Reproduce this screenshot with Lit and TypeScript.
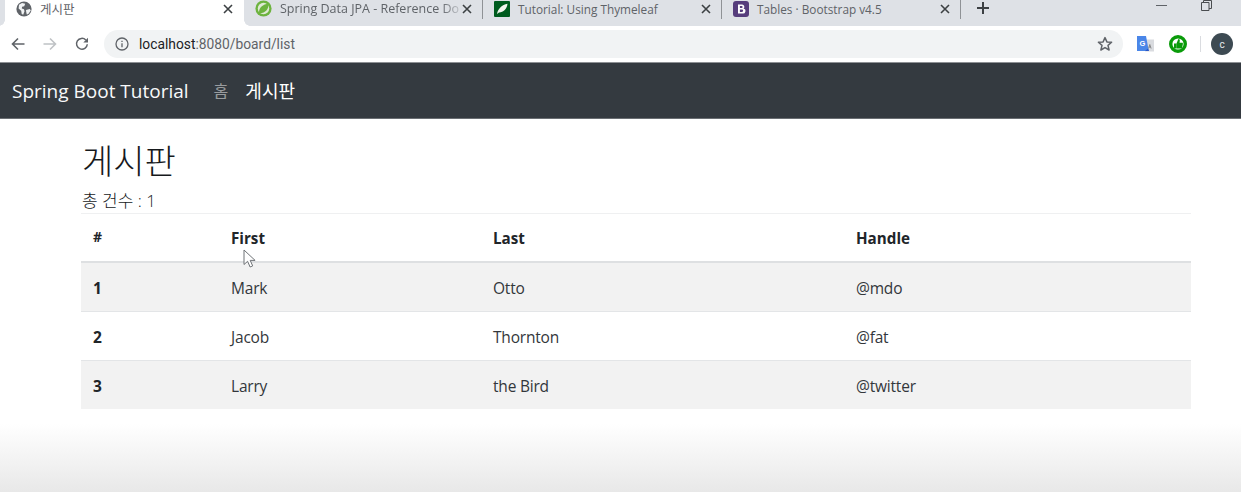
import { LitElement, html, css } from "lit";
import { customElement } from "lit/decorators.js";

const closeIcon = html`<svg class="x" viewBox="0 0 10 10" width="10" height="10"><path d="M1 1L9 9M9 1L1 9" stroke="#3c4043" stroke-width="1.6" fill="none"/></svg>`;

const globe = html`<svg viewBox="0 0 16 16" width="16" height="16"><circle cx="8" cy="8" r="7.6" fill="#5f6368"/><path d="M3 3.800l3-1.700 3.200.7-1 2.400-2.100.6-.3 1.700 2.200.8.5 2-1.300 3.400-1.500-.6-.5-3.400-2.600-2.200zM10 9l3.800-1 1 1.500-2.500 3.600-1.500.3-.6-2.400z" fill="#f1f3f4"/></svg>`;

const spring = html`<svg viewBox="0 0 16 16" width="17" height="17"><circle cx="8" cy="8" r="7.6" fill="#6db33f"/><circle cx="8" cy="8" r="5.4" fill="#dfe9d4"/><path d="M3.800 12.400C3.400 7 7.500 4 12.800 3.600 13 8.800 9.500 12.800 3.800 12.400z" fill="#6db33f"/></svg>`;

const thyme = html`<svg viewBox="0 0 16 16" width="16" height="16"><rect width="16" height="16" rx="1" fill="#005c1f"/><path d="M3 13C4 7.500 8 4 13.500 2.800 13 8 9.500 11.500 5 11.600z" fill="#f2f5ee"/></svg>`;

const boot = html`<svg viewBox="0 0 16 16" width="16" height="16"><rect width="16" height="16" rx="3" fill="#563d7c"/><path d="M5 3.500h4a2.300 2.300 0 0 1 1.500 4.100A2.500 2.500 0 0 1 9.300 12.500H5zM6.900 5.100v2h1.700a1 1 0 0 0 0-2zM6.900 8.600v2.300h2.100a1.150 1.150 0 0 0 0-2.300z" fill="#fff" fill-rule="evenodd"/></svg>`;

const rows = [
  ["1", "Mark", "Otto", "@mdo"],
  ["2", "Jacob", "Thornton", "@fat"],
  ["3", "Larry", "the Bird", "@twitter"],
];

@customElement("app-root")
export class AppRoot extends LitElement {
  static styles = css`
    :host {
      display: block;
      width: 1241px;
      height: 492px;
      overflow: hidden;
      position: relative;
      background: #fff;
      font-family: "Open Sans", "Noto Sans CJK KR", sans-serif;
      color: #212529;
    }
    .strip {
      height: 26px;
      background: #dee1e6;
      display: flex;
      padding-left: 5px;
    }
    .tab {
      width: 239px;
      height: 26px;
      box-sizing: border-box;
      display: flex;
      align-items: center;
      padding: 0 11px 9px 11px;
      gap: 8px;
      font-size: 12.5px;
      color: #5f6368;
      position: relative;
      flex: none;
    }
    .tab.narrow { font-size: 11.8px; }
    .tab.active { background: #fff; }
    .tab.active::before,
    .tab.active::after {
      content: "";
      position: absolute;
      bottom: 0;
      width: 6px;
      height: 6px;
    }
    .tab.active::before {
      left: -6px;
      background: radial-gradient(circle at 0 0, #dee1e6 5.5px, #fff 6px);
    }
    .tab.active::after {
      right: -6px;
      background: radial-gradient(circle at 100% 0, #dee1e6 5.5px, #fff 6px);
    }
    .tab.sep::after {
      content: "";
      position: absolute;
      right: 0;
      top: 0;
      height: 19px;
      width: 1px;
      background: #8f9296;
    }
    .title {
      flex: 1;
      white-space: nowrap;
      min-width: 0;
    }
    .fade {
      display: inline-block;
      -webkit-mask-image: linear-gradient(90deg, #000 90%, rgba(0, 0, 0, 0.25));
      mask-image: linear-gradient(90deg, #000 90%, rgba(0, 0, 0, 0.25));
    }
    .x { flex: none; }
    .plus {
      margin: 1px 0 0 15px;
      height: 14px;
      width: 14px;
      flex: none;
    }
    .winbtns {
      margin-left: auto;
      display: flex;
      gap: 34px;
      padding: 0 29px 0 0;
      align-items: flex-start;
    }
    .toolbar {
      height: 37px;
      background: #fff;
      display: flex;
      align-items: center;
      padding: 0 0 0 11px;
      box-sizing: border-box;
      border-bottom: 1px solid #8d9094;
    }
    .navs { display: flex; gap: 18px; align-items: center; width: 93px; flex: none; }
    .omni {
      width: 1019px;
      height: 28px;
      flex: none;
      border-radius: 14px;
      background: #f1f3f4;
      display: flex;
      align-items: center;
      padding: 0 10px 0 11px;
      box-sizing: border-box;
      font-size: 13.8px;
      color: #5f6368;
      gap: 10px;
      font-family: "Roboto", sans-serif;
    }
    .omni b { font-weight: 400; color: #202124; }
    .omni .star { margin-left: auto; }
    .exts {
      display: flex;
      align-items: center;
      margin-left: 14px;
      flex: none;
    }
    .thumb { margin-left: 15px; }
    .divider { width: 1px; height: 16px; background: #dadce0; margin: 0 10px 0 13px; }
    .avatar {
      width: 22px;
      height: 22px;
      border-radius: 50%;
      background: #3d4a52;
      color: #e8eaed;
      font-size: 10px;
      display: flex;
      align-items: center;
      justify-content: center;
      font-family: "Roboto", sans-serif;
    }
    .navbar {
      height: 56px;
      background: #343a40;
      display: flex;
      align-items: center;
      padding: 0 12px;
      border-bottom: 1px solid #6a6e73;
      box-sizing: border-box;
    }
    .brand {
      font-size: 19px;
      color: #f8f9fa;
      white-space: nowrap;
      margin-right: 25px;
      line-height: 56px;
    }
    .navlink {
      font-size: 16px;
      color: rgba(255, 255, 255, 0.5);
      margin-right: 17px;
      padding-bottom: 2px;
    }
    .navlink.on { color: #fff; font-size: 18px; }
    main {
      margin-left: 81px;
      width: 1110px;
    }
    h1 {
      margin: 0;
      font-size: 34px;
      font-weight: 300;
      line-height: 40px;
      padding: 22px 0 0 1px;
      color: #16191c;
    }
    .count {
      font-size: 17px;
      font-weight: 300;
      line-height: 24px;
      height: 32px;
      padding: 8px 0 0 1px;
      box-sizing: border-box;
      overflow: hidden;
      white-space: nowrap;
      color: #16191c;
    }
    table {
      width: 1110px;
      border-collapse: collapse;
      table-layout: fixed;
      font-size: 15.5px;
      color: #33373b;
    }
    th, td {
      padding: 2px 12px 0;
      text-align: left;
      height: 49px;
      box-sizing: border-box;
      border-top: 1px solid #e3e5e7;
    }
    td { letter-spacing: -0.2px; }
    thead th {
      border-top-color: #eff0f1;
      border-bottom: 2px solid #dee0e2;
      font-weight: 700;
      font-size: 15.2px;
      color: #212529;
      height: 48px;
    }
    tbody th { font-weight: 700; color: #212529; }
    tbody tr:first-child th, tbody tr:first-child td { height: 50px; }
    tbody tr:last-child th, tbody tr:last-child td { height: 48px; }
    thead th:first-child { font-size: 14px; padding-bottom: 3px; }
    tbody tr:nth-child(odd) { background: #f2f2f2; }
    .shade {
      position: absolute;
      left: 0;
      right: 0;
      bottom: 0;
      height: 68px;
      background: linear-gradient(180deg, #ffffff 0%, #e8e8e8 100%);
    }
    .cursor {
      position: absolute;
      left: 243px;
      top: 249px;
    }
  `;

  render() {
    return html`
      <div class="strip">
        <div class="tab active">${globe}<span class="title">게시판</span>${closeIcon}</div>
        <div class="tab sep">${spring}<span class="title"><span class="fade">Spring Data JPA - Reference Do</span></span>${closeIcon}</div>
        <div class="tab sep narrow">${thyme}<span class="title">Tutorial: Using Thymeleaf</span>${closeIcon}</div>
        <div class="tab sep narrow">${boot}<span class="title">Tables · Bootstrap v4.5</span>${closeIcon}</div>
        <svg class="plus" viewBox="0 0 14 14" width="14" height="14"><path d="M7 1v12M1 7h12" stroke="#3c4043" stroke-width="2" fill="none"/></svg>
        <div class="winbtns">
          <svg viewBox="0 0 11 11" width="11" height="11"><path d="M0 5.500h11" stroke="#5f6368" stroke-width="1"/></svg>
          <svg viewBox="0 0 11 11" width="11" height="11"><path d="M.5 2.500h7.500v8H.5zM2.500 2.500V.5h8v8H8" stroke="#4a4d50" fill="none"/></svg>
        </div>
      </div>
      <div class="toolbar">
        <div class="navs">
          <svg viewBox="0 0 14 14" width="14" height="14"><path d="M13.500 7H1.500M7 1.500L1.500 7 7 12.500" stroke="#5f6368" stroke-width="1.600" fill="none"/></svg>
          <svg viewBox="0 0 14 14" width="14" height="14"><path d="M.5 7h12M7 1.500L12.500 7 7 12.500" stroke="#bfc2c5" stroke-width="1.600" fill="none"/></svg>
          <svg viewBox="0 0 14 14" width="14" height="14"><path d="M12.300 7.200A5.400 5.400 0 1 1 10.800 3" stroke="#5f6368" stroke-width="1.500" fill="none"/><path d="M13 .8v4.700H8.300z" fill="#5f6368"/></svg>
        </div>
        <div class="omni">
          <svg viewBox="0 0 14 14" width="14" height="14"><circle cx="7" cy="7" r="6" stroke="#5f6368" stroke-width="1.300" fill="none"/><path d="M7 6.200v4M7 3.700v1.300" stroke="#5f6368" stroke-width="1.300"/></svg>
          <span><b>localhost</b>:8080/board/list</span>
          <svg class="star" viewBox="0 0 16 16" width="16" height="16"><path d="M8 1.600l1.900 4.300 4.700.4-3.600 3.100 1.100 4.600L8 11.600l-4.100 2.400L5 9.400 1.400 6.300l4.700-.4z" stroke="#5f6368" stroke-width="1.500" fill="none" stroke-linejoin="round"/></svg>
        </div>
        <div class="exts">
          <svg viewBox="0 0 17 16" width="17" height="16"><rect x="8" y="3.500" width="9" height="12" fill="#d9dbdf"/><path d="M11.500 12.500l1.300-4 1.300 4M12 11h1.600" stroke="#777" stroke-width=".8" fill="none"/><path d="M0 0h9l2.800 15H0z" fill="#4a86e8"/><path d="M8 15h4L11 12.500z" fill="#2a56c6"/><text x="2.500" y="9.500" font-size="7.500" font-weight="700" font-family="Liberation Sans" fill="#fff">G</text></svg>
          <svg class="thumb" viewBox="0 0 18 18" width="18" height="18"><circle cx="9" cy="9" r="7.300" fill="#fff" stroke="#0a9b0a" stroke-width="3.400"/><path d="M5 8.500h2.300V13.500H5zM7.500 8.500l1.800-4.500c1.300 0 1.700.8 1.500 1.800l-.3 2h2.500c.7 0 1 .5.900 1.100l-.8 3.800c-.1.500-.5.800-1 .8H7.500z" fill="#0a9b0a"/></svg>
          <span class="divider"></span>
          <span class="avatar">c</span>
        </div>
      </div>
      <nav class="navbar">
        <span class="brand">Spring Boot Tutorial</span>
        <span class="navlink">홈</span>
        <span class="navlink on">게시판</span>
      </nav>
      <main>
        <h1>게시판</h1>
        <div class="count">총 건수 : 1</div>
        <table>
          <colgroup>
            <col style="width:138px" /><col style="width:262px" /><col style="width:363px" /><col />
          </colgroup>
          <thead>
            <tr><th>#</th><th>First</th><th>Last</th><th>Handle</th></tr>
          </thead>
          <tbody>
            ${rows.map(
              (r) => html`<tr><th>${r[0]}</th><td>${r[1]}</td><td>${r[2]}</td><td>${r[3]}</td></tr>`
            )}
          </tbody>
        </table>
      </main>
      <div class="shade"></div>
      <svg class="cursor" viewBox="0 0 14 20" width="14" height="20">
        <path d="M1 1v14.500l3.600-3.200 2.500 5.700 2.600-1.100-2.500-5.500h4.900z" fill="#fff" stroke="#6e7276" stroke-width="1"/>
      </svg>
    `;
  }
}
